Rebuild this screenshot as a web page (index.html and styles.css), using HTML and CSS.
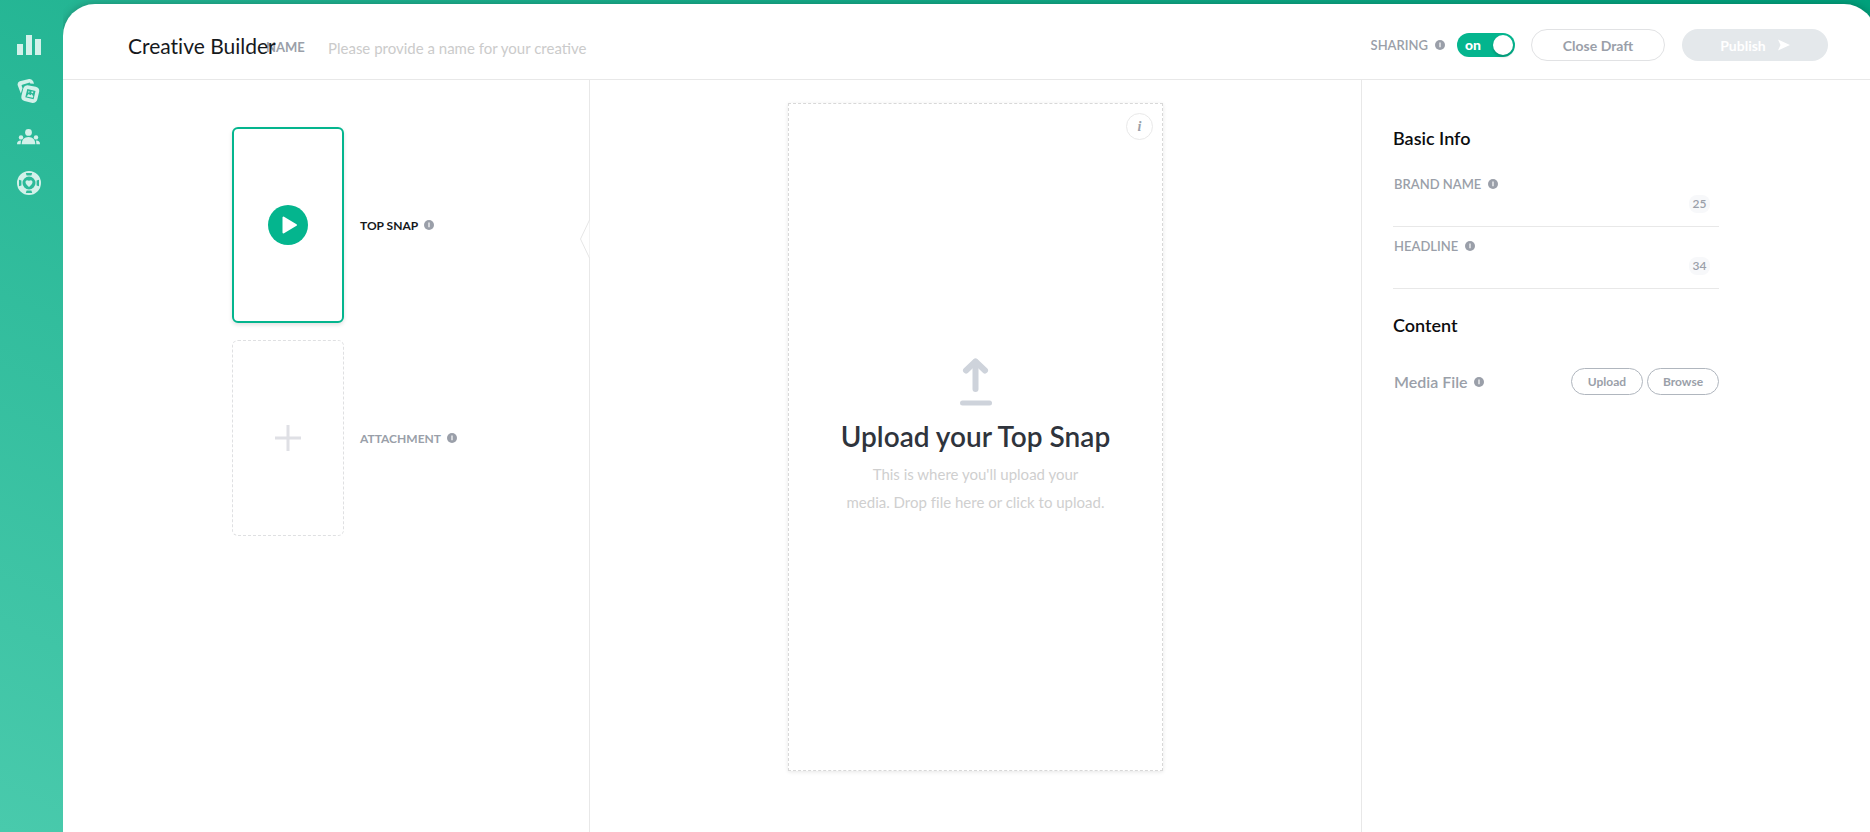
FILE: index.html
```
<!DOCTYPE html>
<html lang="en">
<head>
  <meta charset="utf-8">
  <title>Creative Builder</title>
  <link rel="stylesheet" href="styles.css">
</head>
<body>
  <svg width="0" height="0" class="sprite">
    <symbol id="info" viewBox="0 0 10 10">
      <circle cx="5" cy="5" r="5" fill="#9a9fa9"/>
      <path d="M5 2.6v4.6" stroke="#fff" stroke-width="1.2"/>
    </symbol>
  </svg>

  <nav class="sidebar">
    <a href="#" aria-label="Analytics">
      <svg width="24" height="24" viewBox="0 0 24 24"><path d="M0 11h6v11H0zM9 2h6v20H9zM18 6h6v16h-6z"/></svg>
    </a>
    <a href="#" aria-label="Creatives">
      <svg width="24" height="24" viewBox="0 0 24 24">
        <path d="M3.800 14.500.8 6.600Q-.1 3.600 2.700 2.300L12 .1Q15 -.4 16.300 2.600L17 4.700 13.300 4.500 12.700 3.600 5.300 5.700Q4.400 6 4.700 7L5.500 9.300Z"/>
        <path fill-rule="evenodd" d="M10.500 6.200 18.800 7.800Q22.700 8.700 22.200 12.500L20.300 20.500Q19.300 24 15.500 23.900L7.500 22Q3.700 20.800 4.400 17L6.400 9Q7.500 6 10.500 6.200ZM10.300 10 8.300 18.200 16.600 20.200 18.500 12Z"/>
        <path d="M9.600 17.500 11.600 15 13.400 16.300 14.800 15 16.300 17.500 15.800 18.700ZM11.500 11.800a1 1 0 1 1-.1 2zM14.600 12.300l1.800.5-.4 1.400-1.700-.4z"/>
      </svg>
    </a>
    <a href="#" aria-label="Audiences">
      <svg width="24" height="24" viewBox="0 0 24 24">
        <circle cx="11.500" cy="7.400" r="3.400"/>
        <circle cx="4" cy="12.400" r="2.200"/>
        <circle cx="19" cy="12.400" r="2.200"/>
        <path d="M4.600 19.200Q5 12 11.500 12T18.400 19.200ZM0 19.200Q0 15.400 4 15.500 3.800 17 3.600 19.200ZM23 19.200Q23 15.400 19 15.500 19.200 17 19.400 19.200Z"/>
      </svg>
    </a>
    <a href="#" aria-label="Support">
      <svg width="24" height="24" viewBox="0 0 24 24">
        <path fill-rule="evenodd" d="M12 0a12 12 0 1 1 0 24 12 12 0 1 1 0-24zM12 5.500a6.500 6.500 0 1 0 0 13 6.500 6.500 0 1 0 0-13zM8.800 2l.8 2.400h4.800l.8-2.400zM8.800 22l.8-2.400h4.800l.8 2.400zM2 8.800l2.400.8v4.800L2 15.200zM22 8.800l-2.400.8v4.800l2.400.8z"/>
        <path d="M12 16Q8.300 13 8.500 10.800 9 8.300 12 9.800 15 8.300 15.500 10.800 15.700 13 12 16Z"/>
      </svg>
    </a>
  </nav>

  <div class="app">
    <header class="header">
      <h1 class="title">Creative Builder</h1>
      <label class="name-label" for="creativeName">NAME</label>
      <input class="name-input" type="text" id="creativeName" placeholder="Please provide a name for your creative">
      <label class="caption sharing" for="sharing">SHARING <svg class="info"><use href="#info"/></svg></label>
      <label class="toggle">
        <input type="checkbox" id="sharing" checked>
        <span>on</span>
      </label>
      <button class="btn close-btn">Close Draft</button>
      <button class="btn publish-btn" disabled>Publish
        <svg width="12" height="12" viewBox="0 0 12 12"><path d="M0 .5 12 6 0 11.500 2.500 6Z" fill="#fff"/></svg>
      </button>
    </header>

    <main class="workspace">
      <section class="snaps">
        <div class="snap active">
          <button class="snap-card" aria-label="Top Snap">
            <svg width="40" height="40" viewBox="0 0 40 40">
              <circle cx="20" cy="20" r="20" fill="#04b58e"/>
              <path d="M15.500 12.500v15L28 20Z" fill="#fff" stroke="#fff" stroke-width="2" stroke-linejoin="round"/>
            </svg>
          </button>
          <span class="snap-label">TOP SNAP <svg class="info"><use href="#info"/></svg></span>
        </div>
        <div class="snap">
          <button class="snap-card" aria-label="Add attachment">
            <svg width="26" height="26" viewBox="0 0 26 26"><path d="M13 0v26M0 13h26" stroke="#dfe0e5" stroke-width="3"/></svg>
          </button>
          <span class="snap-label">ATTACHMENT <svg class="info"><use href="#info"/></svg></span>
        </div>
        <svg class="notch" width="10" height="38" viewBox="0 0 10 38"><path d="M9.500 0 .5 19l9 19" fill="#fff" stroke="#e6e6e6"/></svg>
      </section>

      <section class="preview">
        <div class="dropzone">
          <button class="hint" aria-label="Info">i</button>
          <svg width="32" height="48" viewBox="0 0 32 48" fill="none" stroke="#ced3db" stroke-linecap="round" stroke-linejoin="round">
            <path d="M15.500 31V4" stroke-width="6"/>
            <path d="M6 12.500 15.500 3.500 25 12.500" stroke-width="6"/>
            <path d="M2.500 45h27" stroke-width="5"/>
          </svg>
          <h2>Upload your Top Snap</h2>
          <p>This is where you'll upload your<br>media. Drop file here or click to upload.</p>
        </div>
      </section>

      <aside class="details">
        <h3>Basic Info</h3>
        <div class="field">
          <label class="caption" for="brandName">BRAND NAME <svg class="info"><use href="#info"/></svg></label>
          <div class="field-row">
            <input type="text" id="brandName">
            <span class="count">25</span>
          </div>
        </div>
        <div class="field">
          <label class="caption" for="headline">HEADLINE <svg class="info"><use href="#info"/></svg></label>
          <div class="field-row">
            <input type="text" id="headline">
            <span class="count">34</span>
          </div>
        </div>
        <h3 class="content-title">Content</h3>
        <div class="media">
          <span class="media-label">Media File <svg class="info"><use href="#info"/></svg></span>
          <button class="btn small-btn">Upload</button>
          <button class="btn small-btn">Browse</button>
        </div>
      </aside>
    </main>
  </div>
</body>
</html>
```
FILE: styles.css
```
:root {
  --green: #04b58e;
  --line: #e8e8e8;
  --grey: #9a9fa9;
  --text: #16191c;
}

* {
  box-sizing: border-box;
}

body {
  display: flex;
  min-height: 100vh;
  margin: 0;
  overflow: hidden;
  font-family: Lato, "Liberation Sans", sans-serif;
  font-variant-ligatures: none;
  color: var(--text);
  background: linear-gradient(205deg, #00a17c, #49caac);
}

button,
input {
  font-family: inherit;
}

.sprite {
  position: absolute;
}

.sidebar {
  display: flex;
  flex-direction: column;
  gap: 22px;
  width: 63px;
  padding: 33px 0 0 17px;
}

.sidebar a {
  height: 24px;
}

.sidebar svg {
  display: block;
  fill: #d3f1ea;
}

/* runs slightly past the right edge of the window */
.app {
  flex: 1;
  display: flex;
  flex-direction: column;
  margin: 4px -6px 0 0;
  padding-right: 6px;
  background: #fff;
  border-radius: 32px 32px 0 0;
  box-shadow: 0 0 8px rgba(0, 0, 0, 0.25);
  clip-path: inset(-4px 0 0 0);
}

.header {
  display: flex;
  align-items: center;
  height: 76px;
  padding: 7px 42px 0 65px;
  border-bottom: 1px solid var(--line);
}

.title {
  z-index: 1;
  width: 138px;
  margin: 0;
  font-size: 21px;
  font-weight: 400;
  white-space: nowrap;
}

.name-label {
  width: 62px;
  padding-top: 4px;
  font-size: 13px;
  font-weight: 700;
  color: var(--grey);
}

.name-input {
  flex: 1;
  padding: 6px 0 0;
  border: 0;
  outline: none;
  font-size: 15px;
  background: none;
}

.name-input::placeholder {
  color: #cbcbcb;
}

.info {
  width: 10px;
  height: 10px;
}

.caption {
  display: flex;
  align-items: center;
  gap: 7px;
  font-size: 13px;
  font-weight: 600;
  color: var(--grey);
}

.toggle {
  display: flex;
  align-items: center;
  justify-content: space-between;
  width: 58px;
  height: 24px;
  margin: 0 16px 0 12px;
  padding: 0 2px 0 8px;
  border-radius: 12px;
  font-size: 14px;
  font-weight: 900;
  line-height: 20px;
  color: #fff;
  background: var(--green);
}

.toggle input {
  order: 1;
  width: 20px;
  height: 20px;
  margin: 0;
  appearance: none;
  border-radius: 50%;
  background: #fff;
  box-shadow: 0 2px 3px rgba(0, 0, 0, 0.2);
}

.btn {
  height: 32px;
  border: 1px solid #e1e2e4;
  border-radius: 16px;
  font-size: 14px;
  font-weight: 700;
  color: var(--grey);
  background: #fff;
}

.close-btn {
  width: 134px;
  margin-right: 17px;
}

.publish-btn {
  display: flex;
  align-items: center;
  justify-content: center;
  gap: 12px;
  width: 146px;
  border: 0;
  color: #fff;
  background: #e4e8eb;
}

.workspace {
  flex: 1;
  display: flex;
}

.snaps {
  position: relative;
  width: 527px;
  padding: 47px 0 0 169px;
  border-right: 1px solid var(--line);
}

.snap {
  display: flex;
  align-items: center;
  gap: 16px;
  margin-bottom: 17px;
}

.snap-card {
  display: flex;
  align-items: center;
  justify-content: center;
  width: 112px;
  height: 196px;
  padding: 0;
  border: 1px dashed #dfe0e2;
  border-radius: 6px;
  background: #fff;
}

.snap-label {
  display: flex;
  align-items: center;
  gap: 6px;
  font-size: 12px;
  font-weight: 700;
  color: var(--grey);
}

.active .snap-card {
  border: 2px solid var(--green);
  box-shadow: 0 2px 4px rgba(0, 0, 0, 0.12);
}

.active .snap-label {
  color: var(--text);
}

/* arrow of the step panel, sits on its right border */
.notch {
  position: absolute;
  top: 140px;
  right: -1px;
}

.preview {
  flex: 1;
  display: flex;
  justify-content: center;
  align-items: flex-start;
  padding-top: 23px;
}

.dropzone {
  position: relative;
  display: flex;
  flex-direction: column;
  align-items: center;
  justify-content: center;
  width: 375px;
  height: 668px;
  border: 1px dashed #d8d8d8;
  box-shadow: 0 1px 4px rgba(0, 0, 0, 0.1);
}

.hint {
  position: absolute;
  top: 9px;
  right: 9px;
  width: 27px;
  height: 27px;
  padding: 0;
  border: 1px solid #e9e9e9;
  border-radius: 50%;
  font: italic 700 14px "Liberation Serif", serif;
  color: var(--grey);
  background: #fff;
}

.dropzone h2 {
  margin: 12px 0 6px;
  font-size: 28px;
  font-weight: 600;
  line-height: 36px;
  color: #2f343c;
}

.dropzone p {
  margin: 0;
  font-size: 15px;
  line-height: 28px;
  text-align: center;
  color: #cfcfcf;
}

.details {
  width: 509px;
  padding: 46px 151px 0 31px;
  border-left: 1px solid var(--line);
}

.details h3 {
  margin: 0 0 15px;
  font-size: 18px;
  font-weight: 600;
  line-height: 24px;
  color: #0c0d0f;
}

.field {
  height: 62px;
  padding: 11px 0 0;
  border-bottom: 1px solid var(--line);
}

.field .caption {
  padding-left: 1px;
  line-height: 16px;
}

.field-row {
  display: flex;
  align-items: center;
  padding-right: 9px;
}

.field-row input {
  flex: 1;
  height: 24px;
  padding: 0 2px;
  border: 0;
  outline: none;
  font-size: 14px;
  background: none;
}

.count {
  width: 21px;
  border-radius: 8px;
  font-size: 12px;
  font-weight: 600;
  line-height: 18px;
  text-align: center;
  color: var(--grey);
  background: #f7f8fa;
}

.details .content-title {
  margin: 24px 0 31px;
}

.media {
  display: flex;
  align-items: center;
  gap: 4px;
}

.media-label {
  flex: 1;
  display: flex;
  align-items: center;
  gap: 6px;
  padding-left: 1px;
  font-size: 16px;
  font-weight: 600;
  color: var(--grey);
}

.small-btn {
  width: 72px;
  height: 27px;
  padding: 0;
  border-color: #b0b6be;
  font-size: 12px;
}
```
